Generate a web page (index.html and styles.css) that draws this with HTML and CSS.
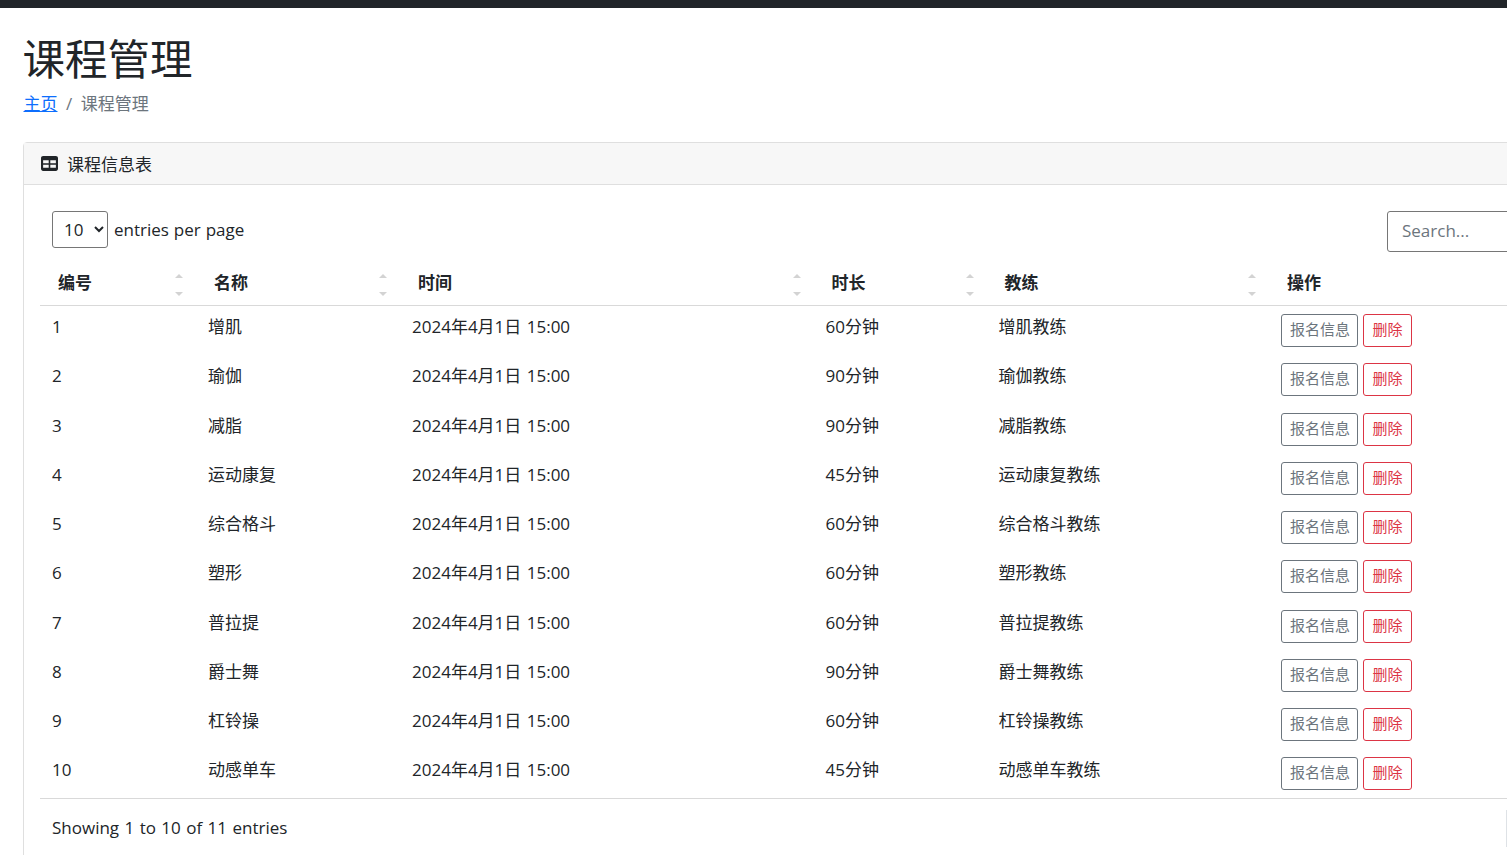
FILE: index.html
```html
<!DOCTYPE html>
<html lang="zh-CN">
<head>
<meta charset="utf-8">
<title>课程管理</title>
<link rel="stylesheet" href="styles.css">
</head>
<body>
<div class="topbar"></div>
<main class="content">
  <h1 class="title">课程管理</h1>
  <ol class="crumbs">
    <li><a href="#">主页</a></li>
    <li class="sep">/</li>
    <li class="current">课程管理</li>
  </ol>
  <section class="card">
    <header class="card-head">
      <svg class="icon" viewBox="0 0 512 512" width="17" height="17"><path d="M64 32C28.700 32 0 60.700 0 96v320c0 35.300 28.700 64 64 64h384c35.300 0 64-28.700 64-64V96c0-35.300-28.700-64-64-64H64zm0 128h168v88H64v-88zm216 0h168v88H280v-88zM64 296h168v88H64v-88zm216 0h168v88H280v-88z" fill="#212529"/></svg>
      <span class="head-text">课程信息表</span>
    </header>
    <div class="card-body">
      <div class="toolbar">
        <label class="per-page">
          <select class="select"><option>10</option><option>25</option></select>
          <span>entries per page</span>
        </label>
        <input class="search" placeholder="Search...">
      </div>
      <table class="table">
        <colgroup>
          <col class="c1"><col class="c2"><col class="c3"><col class="c4"><col class="c5"><col class="c6">
        </colgroup>
        <thead>
          <tr>
            <th><span class="sorter">编号</span></th>
            <th><span class="sorter">名称</span></th>
            <th><span class="sorter">时间</span></th>
            <th><span class="sorter">时长</span></th>
            <th><span class="sorter">教练</span></th>
            <th><span class="plain">操作</span></th>
          </tr>
        </thead>
        <tbody>
          <tr><td>1</td><td>增肌</td><td>2024年4月1日 15:00</td><td>60分钟</td><td>增肌教练</td><td><button class="btn grey">报名信息</button><button class="btn red">删除</button></td></tr>
          <tr><td>2</td><td>瑜伽</td><td>2024年4月1日 15:00</td><td>90分钟</td><td>瑜伽教练</td><td><button class="btn grey">报名信息</button><button class="btn red">删除</button></td></tr>
          <tr><td>3</td><td>减脂</td><td>2024年4月1日 15:00</td><td>90分钟</td><td>减脂教练</td><td><button class="btn grey">报名信息</button><button class="btn red">删除</button></td></tr>
          <tr><td>4</td><td>运动康复</td><td>2024年4月1日 15:00</td><td>45分钟</td><td>运动康复教练</td><td><button class="btn grey">报名信息</button><button class="btn red">删除</button></td></tr>
          <tr><td>5</td><td>综合格斗</td><td>2024年4月1日 15:00</td><td>60分钟</td><td>综合格斗教练</td><td><button class="btn grey">报名信息</button><button class="btn red">删除</button></td></tr>
          <tr><td>6</td><td>塑形</td><td>2024年4月1日 15:00</td><td>60分钟</td><td>塑形教练</td><td><button class="btn grey">报名信息</button><button class="btn red">删除</button></td></tr>
          <tr><td>7</td><td>普拉提</td><td>2024年4月1日 15:00</td><td>60分钟</td><td>普拉提教练</td><td><button class="btn grey">报名信息</button><button class="btn red">删除</button></td></tr>
          <tr><td>8</td><td>爵士舞</td><td>2024年4月1日 15:00</td><td>90分钟</td><td>爵士舞教练</td><td><button class="btn grey">报名信息</button><button class="btn red">删除</button></td></tr>
          <tr><td>9</td><td>杠铃操</td><td>2024年4月1日 15:00</td><td>60分钟</td><td>杠铃操教练</td><td><button class="btn grey">报名信息</button><button class="btn red">删除</button></td></tr>
          <tr><td>10</td><td>动感单车</td><td>2024年4月1日 15:00</td><td>45分钟</td><td>动感单车教练</td><td><button class="btn grey">报名信息</button><button class="btn red">删除</button></td></tr>
        </tbody>
      </table>
      <div class="foot">
        <span>Showing 1 to 10 of 11 entries</span>
        <div class="pager"></div>
      </div>
    </div>
  </section>
</main>
</body>
</html>
```
FILE: styles.css
```css
* { box-sizing: border-box; }
html, body { margin: 0; height: 855px; overflow: hidden; }
body {
  font-family: "Open Sans", "Noto Sans CJK SC", sans-serif;
  font-size: 17px;
  line-height: 25.5px;
  color: #212529;
  background: #fff;
}
.topbar { height: 8px; background: #212529; }
.content { padding: 26px 0 0 23.5px; width: 1640px; }
.title {
  margin: 0 0 0 -1px;
  font-size: 42.5px;
  line-height: 50px;
  font-weight: 400;
}
.crumbs {
  list-style: none;
  display: flex;
  gap: 8.5px;
  margin: 7px 0 0;
  padding: 0;
  height: 26px;
  color: #6c757d;
}
.crumbs a { color: #0d6efd; }
.card {
  margin: 25px 0 0 -0.5px;
  width: 1600px;
  border: 1px solid #dfdfdf;
  border-radius: 4px;
}
.card-head {
  display: flex;
  align-items: center;
  gap: 9px;
  height: 42px;
  padding: 0 16px;
  background: #f7f7f7;
  border-bottom: 1px solid #dfdfdf;
}
.head-text { margin-top: 2px; }
.icon { margin-left: 1px; }
.card-body { padding: 16px; }
.toolbar {
  display: flex;
  justify-content: space-between;
  align-items: flex-start;
  padding: 10px 12px 0;
  height: 60px;
  word-spacing: 0.5px;
}
.per-page { display: flex; align-items: center; gap: 6px; height: 37px; }
.select {
  width: 56px;
  height: 37px;
  padding: 0 0 0 7px;
  border: 1px solid #767676;
  border-radius: 3px;
  background: #fff;
  font: inherit;
  color: #212529;
}
.search {
  width: 207px;
  height: 41px;
  padding: 0 14px 2px;
  border: 1px solid #767676;
  border-radius: 3px;
  font: inherit;
}
.search::placeholder { color: #6c757d; }
.table {
  width: 1559px;
  table-layout: fixed;
  border-collapse: separate;
  border-spacing: 0;
}
.c1 { width: 156px; }
.c2 { width: 204px; }
.c3 { width: 413.5px; }
.c4 { width: 173px; }
.c5 { width: 282.5px; }
.c6 { width: 330px; }
th {
  height: 45px;
  padding: 0 12px 1px;
  text-align: left;
  font-weight: 700;
  vertical-align: middle;
  border-bottom: 1px solid #d9d9d9;
}
td {
  height: 49.25px;
  padding: 8px 12px;
  vertical-align: top;
  word-spacing: 1px;
}
tbody tr:last-child td {
  height: 49.5px;
  border-bottom: 1px solid #d9d9d9;
}
.sorter, .plain {
  display: block;
  position: relative;
  padding-left: 6px;
}
.sorter::before, .sorter::after {
  content: "";
  position: absolute;
  right: 1px;
  border-left: 4px solid transparent;
  border-right: 4px solid transparent;
}
.sorter::before { top: 4px; border-bottom: 4px solid #d3d3d3; }
.sorter::after { bottom: -1px; border-top: 4px solid #d3d3d3; }
.btn {
  display: inline-block;
  height: 33px;
  margin-right: 5px;
  background: #fff;
  border: 1px solid;
  border-radius: 3px;
  font: inherit;
  font-size: 15px;
  line-height: 22px;
  vertical-align: top;
}
.grey { padding: 0 7px 3px 8px; border-color: #6c757d; color: #6c757d; }
.red { padding: 0 8.5px 3px; border-color: #dc3545; color: #dc3545; }
.foot {
  display: flex;
  justify-content: space-between;
  align-items: center;
  padding: 10px 12px 0;
  height: 47.75px;
  word-spacing: 1px;
}
.pager {
  width: 100px;
  height: 37px;
  margin-right: -12px;
  border: 1px solid #dee2e6;
}
```
